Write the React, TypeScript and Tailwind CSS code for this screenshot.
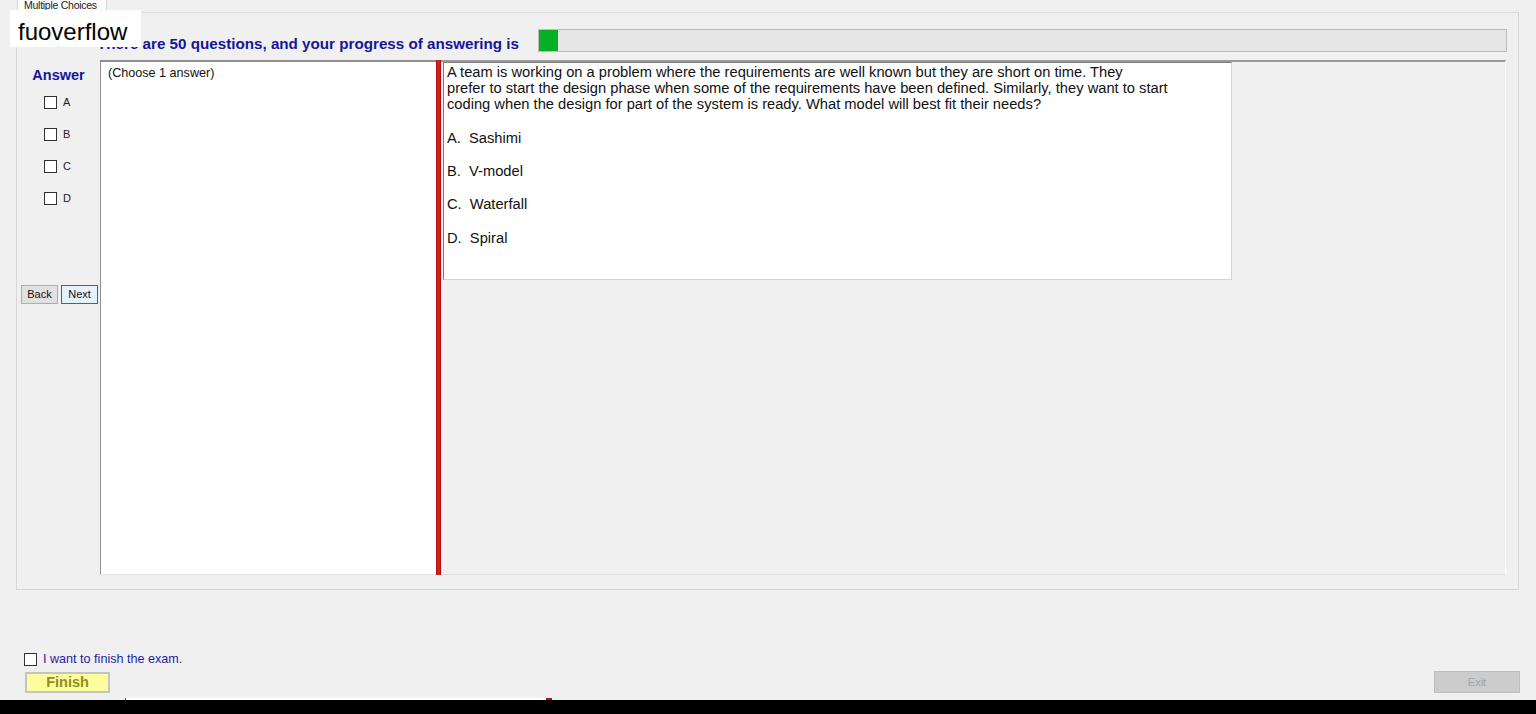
import React, { useState } from 'react';

const OPTIONS = ['A', 'B', 'C', 'D'];

const QUESTION_LINES = [
  'A team is working on a problem where the requirements are well known but they are short on time. They',
  'prefer to start the design phase when some of the requirements have been defined. Similarly, they want to start',
  'coding when the design for part of the system is ready. What model will best fit their needs?',
];

const CHOICES = ['A.  Sashimi', 'B.  V-model', 'C.  Waterfall', 'D.  Spiral'];

const Box: React.FC<{ checked: boolean; onClick: () => void }> = ({ checked, onClick }) => (
  <span
    onClick={onClick}
    className="w-[13px] h-[13px] border border-[#333333] bg-white flex items-center justify-center text-[10px] leading-none cursor-default"
  >
    {checked ? '✓' : ''}
  </span>
);

const App: React.FC = () => {
  const [picked, setPicked] = useState<string | null>(null);
  const [finish, setFinish] = useState(false);
  const answered = picked ? 2 : 1;

  return (
    <div className="w-[1536px] h-[714px] bg-[#f0f0f0] flex flex-col overflow-hidden relative font-['Liberation_Sans',Arial,sans-serif] text-[#111111]">
      {/* watermark label */}
      <div className="absolute left-[10px] top-[10px] w-[131px] h-[37px] bg-white flex items-center pl-[8px] pt-[6px] text-[24px] leading-none text-black z-10">
        fuoverflow
      </div>

      {/* tab strip */}
      <div className="h-[12px] pl-[17px] flex">
        <div className="w-[90px] h-[13px] bg-[#fbfbfb] border border-b-0 border-[#d6d6d6] text-[10.5px] leading-[11px] pl-[6px] text-[#222222] tracking-tight -mt-[2px] pt-[1px] z-0">
          Multiple Choices
        </div>
      </div>

      {/* tab page */}
      <div className="h-[578px] ml-[16px] mr-[17px] border border-t-[#dadada] border-x-[#d8d8d8] border-b-[#d4d4d4] flex flex-col">
        <div className="h-[23px] mt-[16px] flex items-end pr-[11px]">
          <div className="pl-[80px] w-[521px] text-[15.2px] leading-[17px] font-bold text-[#15159c] whitespace-nowrap">
            There are 50 questions, and your progress of answering is
          </div>
          <div className="flex-1 h-[23px] bg-[#e6e6e6] border border-[#bcbcbc] flex">
            <div className="h-full bg-[#06b025]" style={{ width: `${answered * 19}px` }} />
          </div>
        </div>

        <div className="h-[515px] mt-[8px] flex pr-[12px]">
          {/* answer column */}
          <div className="w-[83px] flex flex-col">
            <div className="mt-[7px] text-center text-[14.5px] leading-[17px] font-bold text-[#15159c]">Answer</div>
            <div className="mt-[12px] pl-[27px] flex flex-col gap-[19px]">
              {OPTIONS.map((o) => (
                <div key={o} className="h-[13px] flex items-center gap-[6px] text-[11px] text-[#222222]">
                  <Box checked={picked === o} onClick={() => setPicked(picked === o ? null : o)} />
                  <span>{o}</span>
                </div>
              ))}
            </div>
            <div className="mt-[80px] pl-[4px] flex gap-[3px]">
              <button className="w-[37px] h-[19px] bg-[#e1e1e1] border border-[#adadad] text-[11px] leading-none text-[#111111]">
                Back
              </button>
              <button className="w-[37px] h-[19px] bg-[#e5f1fb] border border-[#0078d7] text-[11px] leading-none text-[#111111]">
                Next
              </button>
            </div>
          </div>

          {/* answer text box */}
          <div className="w-[336px] h-full bg-white border-t-2 border-l border-t-[#8f8f8f] border-l-[#8f8f8f] border-b border-b-[#e2e2e2] pt-[4px] pl-[7px] text-[12.6px] leading-[15px] text-[#111111]">
            (Choose 1 answer)
          </div>

          {/* splitter */}
          <div className="w-[5px] h-full bg-[#d41e1e] border-x border-[#b01010]" />

          {/* question panel */}
          <div className="flex-1 h-full border-t-2 border-t-[#9a9a9a] border-r border-r-[#fafafa] border-b border-b-[#dcdcdc] pl-[2px]">
            <div className="w-[789px] h-[218px] bg-white border-l border-t border-[#7c7c7c] border-r-[#d4d4d4] border-b-[#d4d4d4] border-r border-b pl-[3px] pt-[1px] text-[14.7px] leading-[16px] text-[#111111]">
              {QUESTION_LINES.map((l) => (
                <div key={l} className="whitespace-nowrap">{l}</div>
              ))}
              {CHOICES.map((c, i) => (
                <div key={c} className={i === 0 ? 'whitespace-pre mt-[18px]' : i === 3 ? 'whitespace-pre mt-[18px]' : 'whitespace-pre mt-[17px]'}>
                  {c}
                </div>
              ))}
            </div>
          </div>
        </div>
      </div>

      {/* finish area */}
      <div className="h-[108px] pl-[24px] pr-[16px] flex items-end justify-between pb-[5px]">
        <div className="flex flex-col">
          <div className="h-[16px] flex items-center gap-[6px] text-[12.6px] text-[#1e1ea0]">
            <Box checked={finish} onClick={() => setFinish(!finish)} />
            <span>I want to finish the exam.</span>
          </div>
          <button className="mt-[5px] ml-[1px] w-[85px] h-[21px] bg-[#fdfd9e] border-2 border-[#c4c4c4] text-[14.5px] leading-none font-bold text-[#8f8f1c]">
            Finish
          </button>
        </div>
        <button className="w-[86px] h-[22px] bg-[#cccccc] border border-[#bdbdbd] text-[11px] leading-none text-[#a3a3a3]">
          Exit
        </button>
      </div>

      {/* edge of the next row */}
      <div className="h-[2px] flex">
        <div className="w-[125px]" />
        <div className="w-[1px] bg-[#555555]" />
        <div className="w-[420px] bg-white" />
        <div className="w-[6px] bg-[#a01818]" />
      </div>
      <div className="flex-1 bg-black" />
    </div>
  );
};

export default App;
